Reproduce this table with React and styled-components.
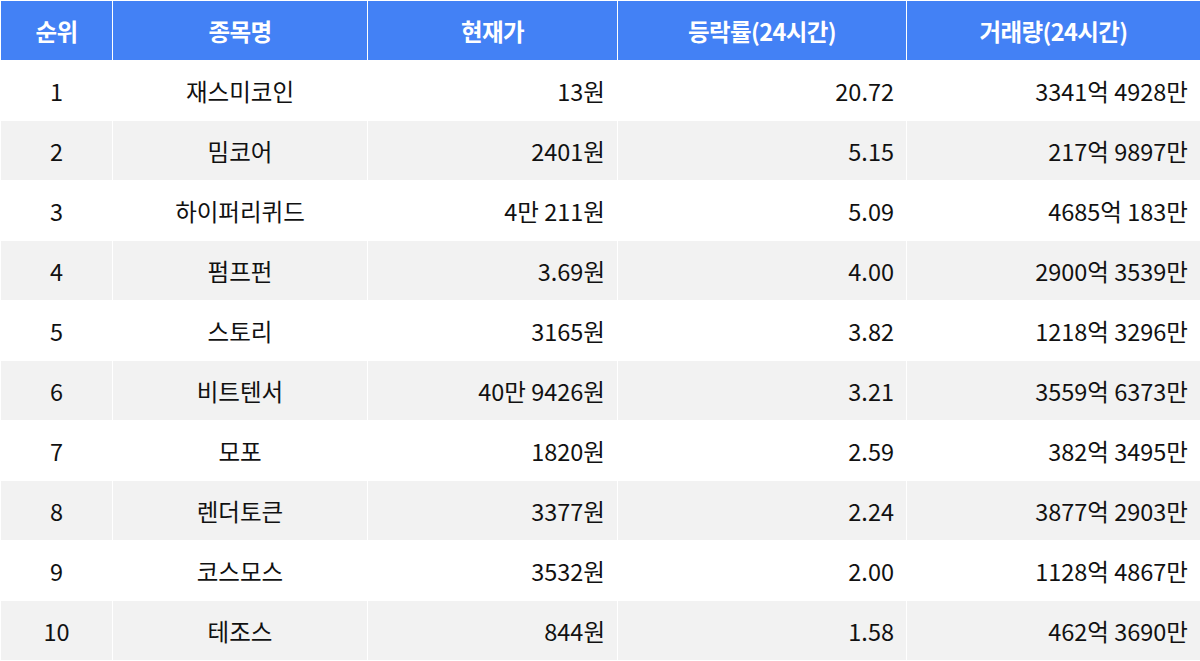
import React from "react";
import styled, { createGlobalStyle } from "styled-components";

const Global = createGlobalStyle`
  html, body { margin: 0; padding: 0; background: #fff; }
  body { font-family: "Noto Sans CJK KR", "Noto Sans", sans-serif; }
`;

const Table = styled.table`
  width: 1200px;
  table-layout: fixed;
  border-collapse: collapse;
  font-family: "Noto Sans CJK KR", "Noto Sans", sans-serif;
  font-size: 23.5px;
  color: #111;
`;

const HeadCell = styled.th`
  height: 59px;
  padding: 0 12px;
  background: #4381f5;
  color: #fff;
  font-weight: 700;
  text-align: center;
  border: 1px solid #fff;
  letter-spacing: -0.6px;
`;

const Row = styled.tr`
  background: ${(p) => (p.$alt ? "#f2f2f2" : "#fff")};
`;

const Cell = styled.td`
  height: 59px;
  padding: 0 12px;
  text-align: ${(p) => p.$align || "center"};
  border: 1px solid #fff;
  white-space: nowrap;
`;

const cols = [112, 255, 250, 289, 294];

const data = [
  ["1", "재스미코인", "13원", "20.72", "3341억 4928만"],
  ["2", "밈코어", "2401원", "5.15", "217억 9897만"],
  ["3", "하이퍼리퀴드", "4만 211원", "5.09", "4685억 183만"],
  ["4", "펌프펀", "3.69원", "4.00", "2900억 3539만"],
  ["5", "스토리", "3165원", "3.82", "1218억 3296만"],
  ["6", "비트텐서", "40만 9426원", "3.21", "3559억 6373만"],
  ["7", "모포", "1820원", "2.59", "382억 3495만"],
  ["8", "렌더토큰", "3377원", "2.24", "3877억 2903만"],
  ["9", "코스모스", "3532원", "2.00", "1128억 4867만"],
  ["10", "테조스", "844원", "1.58", "462억 3690만"],
];

export default function App() {
  return (
    <>
      <Global />
      <Table>
        <colgroup>
          {cols.map((w, i) => (
            <col key={i} style={{ width: w }} />
          ))}
        </colgroup>
        <thead>
          <tr>
            <HeadCell>순위</HeadCell>
            <HeadCell>종목명</HeadCell>
            <HeadCell>현재가</HeadCell>
            <HeadCell>등락률(24시간)</HeadCell>
            <HeadCell>거래량(24시간)</HeadCell>
          </tr>
        </thead>
        <tbody>
          {data.map((r, i) => (
            <Row key={i} $alt={i % 2 === 1}>
              <Cell>{r[0]}</Cell>
              <Cell>{r[1]}</Cell>
              <Cell $align="right">{r[2]}</Cell>
              <Cell $align="right">{r[3]}</Cell>
              <Cell $align="right">{r[4]}</Cell>
            </Row>
          ))}
        </tbody>
      </Table>
    </>
  );
}
